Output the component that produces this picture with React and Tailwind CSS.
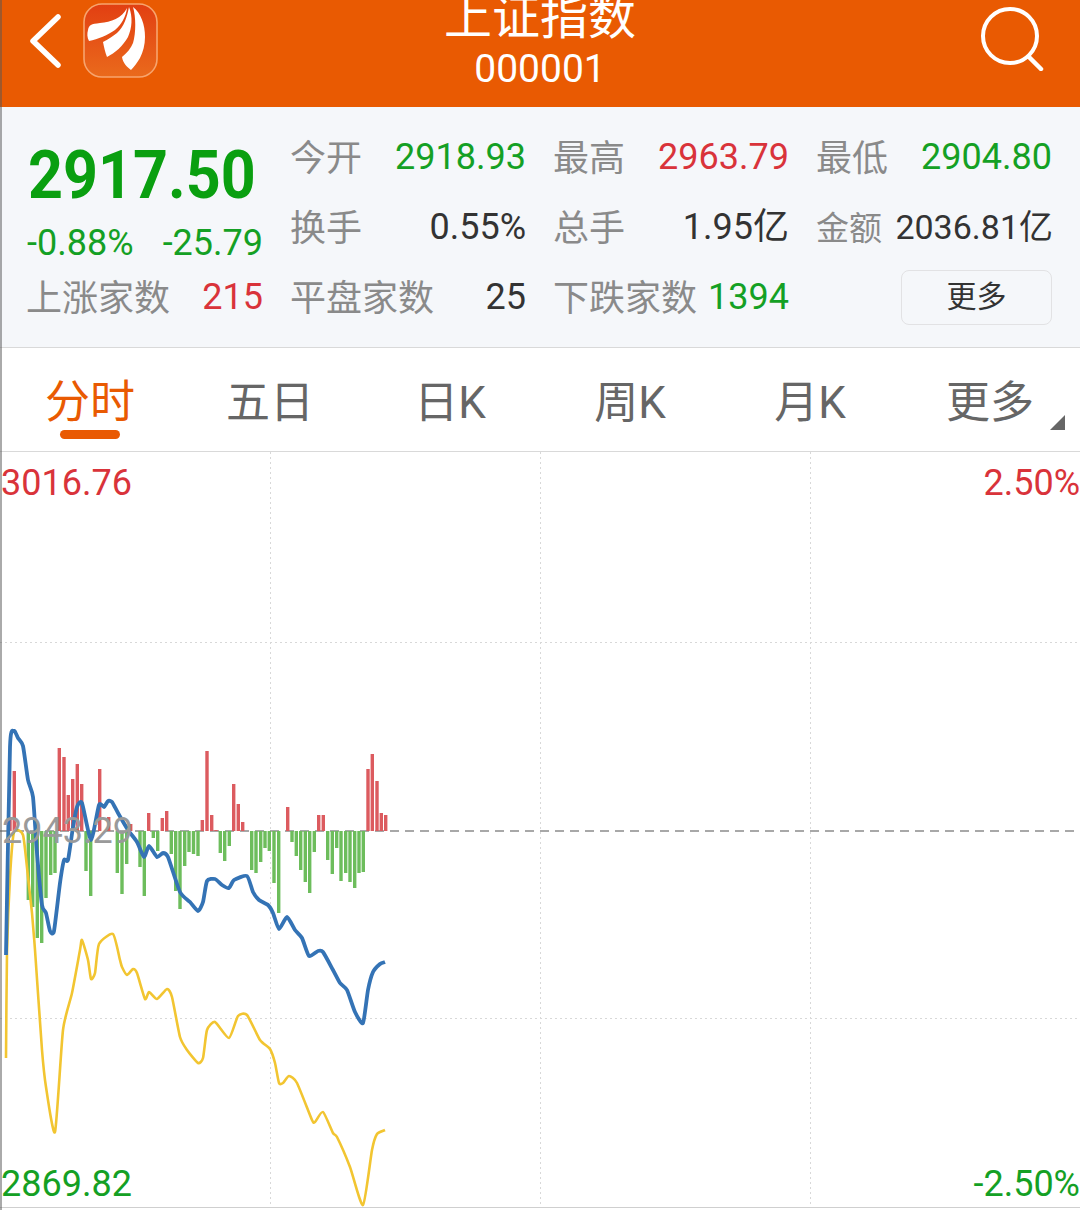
const redBars = [
  [10, 14], [14.3, 60], [59.3, 83], [64, 74], [68.3, 36], [72.7, 52], [77.3, 67], [81.7, 47], [99.7, 62], [108.7, 14],
  [130.7, 7], [148.7, 18], [162.3, 13], [166.7, 20], [202.3, 11], [207, 80], [211.7, 16], [216, 1], [233.7, 47],
  [238.3, 27], [242.7, 9], [287.7, 24], [318.7, 16], [323.3, 16], [368, 62], [372.3, 77], [377, 50], [381.3, 18], [385.7, 16],
];
const greenBars = [
  [28.3, 69], [32.7, 76], [37.3, 107], [41.7, 112], [46, 67], [50.7, 44], [55, 42], [86, 40], [90.7, 65], [117.3, 42],
  [122, 63], [126.7, 33], [140, 36], [144.3, 65], [153.3, 7], [157.7, 20], [171.3, 23], [175.7, 60], [180, 78], [184.7, 35],
  [189, 21], [193.5, 23], [198, 25], [220.3, 22], [224.7, 30], [229.3, 15], [251.7, 39], [256, 42], [260.7, 31], [265, 17],
  [269.3, 20], [274, 52], [278.7, 82], [292, 11], [296.3, 25], [300.7, 39], [305.3, 51], [309.7, 62], [314.3, 21], [327.7, 29],
  [332.3, 43], [336.7, 17], [341, 50], [345.7, 42], [350, 51], [354.7, 57], [359, 42], [363.3, 41],
];
const blueLine =
  "6,955 10,747 14,731 18,738 23,746 28,780 33,797 37,853 42,905 46,913 50,931 54,931 60,883 64,860 68,860 73,827 77,807 82,803 91,840 99,805 104,807 108,801 112,802 118,813 128,830 137,842 144,857 149,846 157,857 163,853 168,857 180,892 190,902 198,911 203,902 207,881 215,879 222,885 229,888 234,880 247,876 253,892 259,900 268,905 273,913 279,929 287,917 295,930 302,938 309,956 318,951 323,952 333,970 340,983 347,990 355,1012 363,1023 368,990 373,972 380,964 385,962";
const yellowLine =
  "6,1058 7,953 10,877 14,832 23,835 28,877 32,913 35,950 42,1050 46,1087 55,1132 63,1030 72,993 80,950 82,940 88,960 91,979 95,973 99,944 113,934 120,960 122,967 127,975 133,969 137,973 145,999 149,992 157,999 167,989 172,997 180,1037 187,1050 198,1063 203,1058 207,1030 215,1022 229,1038 238,1016 247,1015 260,1040 270,1049 275,1063 279,1083 283,1083 289,1076 297,1083 312,1120 315,1122 323,1112 333,1133 337,1137 350,1167 363,1205 372,1150 377,1134 385,1130";

// points -> smooth path (catmull-rom)
const smooth = (str) => {
  const p = str.split(" ").map((s) => s.split(",").map(Number));
  let d = `M${p[0][0]} ${p[0][1]}`;
  for (let i = 0; i < p.length - 1; i++) {
    const a = p[i - 1] || p[i];
    const b = p[i];
    const c = p[i + 1];
    const e = p[i + 2] || c;
    const k = 10;
    d += ` C${b[0] + (c[0] - a[0]) / k} ${b[1] + (c[1] - a[1]) / k} ${c[0] - (e[0] - b[0]) / k} ${c[1] - (e[1] - b[1]) / k} ${c[0]} ${c[1]}`;
  }
  return d;
};

const Logo = () => (
  <svg width="76" height="76" viewBox="0 0 76 76" className="ml-[19px] shrink-0">
    <defs>
      <linearGradient id="logoBg" x1="0" y1="0" x2="0" y2="1">
        <stop offset="0" stopColor="#e23f12" />
        <stop offset="1" stopColor="#ea6a1c" />
      </linearGradient>
    </defs>
    <rect x="1" y="1" width="73" height="73" rx="18" fill="url(#logoBg)" stroke="#f7a46e" strokeWidth="1.6" />
    <path d="M5 27 C6 22 8 21 17 20 C28 19 39 15 44 5 C43 14 38 22 32 27 C25 32 15 36 6 38 C4 34 4 31 5 27 Z" fill="#fff" />
    <path d="M20 39 C26 36 30 33 34 30 C41 24 44 14 46 4 C50 14 49 25 45 34 C40 43 32 50 24 54 C22 49 21 44 20 39 Z" fill="#fff" />
    <path d="M39 54 C44 50 48 45 50 40 C53 30 53 14 50 4 C58 10 62 22 62 34 C62 42 60 49 57 55 C54 60 51 64 48 67 C44 64 40 60 39 54 Z" fill="#fff" />
  </svg>
);

const Stat = ({ label, value, color }) => (
  <div className="flex items-center justify-between h-[70px]">
    <span className="text-[#8a8a8a] -ml-[2px] mt-[3px]">{label}</span>
    <span className={color}>{value}</span>
  </div>
);

const Chart = () => (
  <svg viewBox="0 452 1080 758" className="absolute inset-0 w-full h-full">
    <line x1="0" y1="1207.5" x2="1080" y2="1207.5" stroke="#cfcfcf" />
    {[270.5, 540.5, 810.5].map((x) => (
      <line key={x} x1={x} y1="452" x2={x} y2="1207" stroke="#d8d8d8" strokeDasharray="2 3" />
    ))}
    {[642.5, 1018.5].map((y) => (
      <line key={y} x1="0" y1={y} x2="1080" y2={y} stroke="#d8d8d8" strokeDasharray="2 3" />
    ))}
    <line x1="0" y1="831" x2="1080" y2="831" stroke="#8c8c8c" strokeWidth="1.5" strokeDasharray="9 6" />
    {redBars.map(([x, h]) => (
      <rect key={x} x={x - 1.7} y={831 - h} width="3.4" height={h} fill="#dc5b5f" />
    ))}
    {greenBars.map(([x, h]) => (
      <rect key={x} x={x - 1.7} y="831" width="3.4" height={h} fill="#6dbd5c" />
    ))}
    <path d={smooth(yellowLine)} fill="none" stroke="#f2c531" strokeWidth="2.6" strokeLinejoin="round" />
    <path d={smooth(blueLine)} fill="none" stroke="#3473b5" strokeWidth="3.8" strokeLinejoin="round" />
  </svg>
);

export default function App() {
  return (
    <div
      className="w-[1080px] h-[1210px] overflow-hidden bg-white flex flex-col relative"
      style={{ fontFamily: 'Roboto, "Noto Sans CJK SC", sans-serif' }}
    >
      {/* 헤더 */}
      <div className="h-[107px] shrink-0 bg-[#e95a02] flex items-center justify-between text-white overflow-hidden relative">
        <div className="flex items-center pl-[28px] -mt-[25px]">
          <svg width="36" height="56" viewBox="0 0 36 56" fill="none">
            <path d="M30 4 L5 28 L30 52" stroke="#fff" strokeWidth="5.5" strokeLinecap="round" strokeLinejoin="round" />
          </svg>
          <Logo />
        </div>
        <div className="absolute left-0 right-0 top-[-10px] flex flex-col items-center">
          <div className="text-[48px] leading-[56px]">上证指数</div>
          <div className="text-[39px] leading-[46px]">000001</div>
        </div>
        <svg width="66" height="66" viewBox="0 0 66 66" fill="none" className="mr-[34px] -mt-[32px]">
          <circle cx="30" cy="31" r="27" stroke="#fff" strokeWidth="4" />
          <path d="M49 52 L61 64" stroke="#fff" strokeWidth="4.5" strokeLinecap="round" />
        </svg>
      </div>

      {/* 시세 */}
      <div className="h-[241px] shrink-0 bg-[#f5f7fa] border-b border-[#d9d9d9] pl-[28px] pr-[28px] flex gap-[29px] text-[36px] leading-[70px] pt-[15px]">
        <div className="w-[235px] shrink-0">
          <div className="h-[102px] pt-[5px] flex items-center text-[#0a9f10] text-[61px] font-bold leading-none">
            <span className="inline-block scale-y-110">2917.50</span>
          </div>
          <div className="h-[38px] flex items-center justify-between text-[#14a024] text-[36px]">
            <span className="-ml-[1px]">-0.88%</span>
            <span>-25.79</span>
          </div>
          <Stat label="上涨家数" value="215" color="text-[#d9333a]" />
        </div>
        <div className="w-[234px] shrink-0">
          <Stat label="今开" value="2918.93" color="text-[#14a024]" />
          <Stat label="换手" value="0.55%" color="text-[#333]" />
          <Stat label="平盘家数" value="25" color="text-[#333]" />
        </div>
        <div className="w-[234px] shrink-0">
          <Stat label="最高" value="2963.79" color="text-[#d9333a]" />
          <Stat label="总手" value="1.95亿" color="text-[#333]" />
          <Stat label="下跌家数" value="1394" color="text-[#14a024]" />
        </div>
        <div className="w-[234px] shrink-0">
          <Stat label="最低" value="2904.80" color="text-[#14a024]" />
          <div className="flex items-center justify-between h-[70px]">
            <span className="text-[#8a8a8a] text-[33px] -ml-[2px] mt-[3px]">金额</span>
            <span className="text-[#333] text-[34px] mr-[-1px]">2036.81亿</span>
          </div>
          <div className="h-[70px] flex items-center justify-end">
            <div className="w-[151px] h-[55px] border border-[#e2e2e4] rounded-[8px] flex items-center justify-center text-[30px] leading-none text-[#333]">
              更多
            </div>
          </div>
        </div>
      </div>

      {/* 탭 */}
      <div className="h-[104px] shrink-0 border-b border-[#d9d9d9] grid grid-cols-6 text-[44px] text-[#666] relative">
        <div className="flex flex-col items-center text-[#e95a02] text-[45px] leading-[56px] pt-[27px]">
          <span>分时</span>
          <span className="w-[60px] h-[9px] rounded-full bg-[#e95a02] mt-[-1px]" />
        </div>
        <div className="flex justify-center pt-[27px] leading-[56px]">五日</div>
        <div className="flex justify-center pt-[27px] leading-[56px]">日K</div>
        <div className="flex justify-center pt-[27px] leading-[56px]">周K</div>
        <div className="flex justify-center pt-[27px] leading-[56px]">月K</div>
        <div className="flex justify-center pt-[27px] leading-[56px] relative">
          更多
          <span className="absolute right-[15px] top-[67px] w-0 h-0 border-l-[15px] border-l-transparent border-b-[15px] border-b-[#666]" />
        </div>
      </div>

      {/* 차트 */}
      <div className="flex-1 relative text-[36px] leading-none">
        <Chart />
        <div className="absolute left-[1px] top-[13px] text-[#d9333a]">3016.76</div>
        <div className="absolute right-[0px] top-[13px] text-[#d9333a]">2.50%</div>
        <div className="absolute left-[2px] top-[361px] text-[#9a9a9a]">2943.29</div>
        <div className="absolute left-[1px] top-[714px] text-[#14a024]">2869.82</div>
        <div className="absolute right-[0px] top-[714px] text-[#14a024]">-2.50%</div>
      </div>

      {/* 왼쪽 가장자리 선 */}
      <div className="absolute left-0 top-0 bottom-0 w-[1.5px] bg-[#555]/50" />
    </div>
  );
}
